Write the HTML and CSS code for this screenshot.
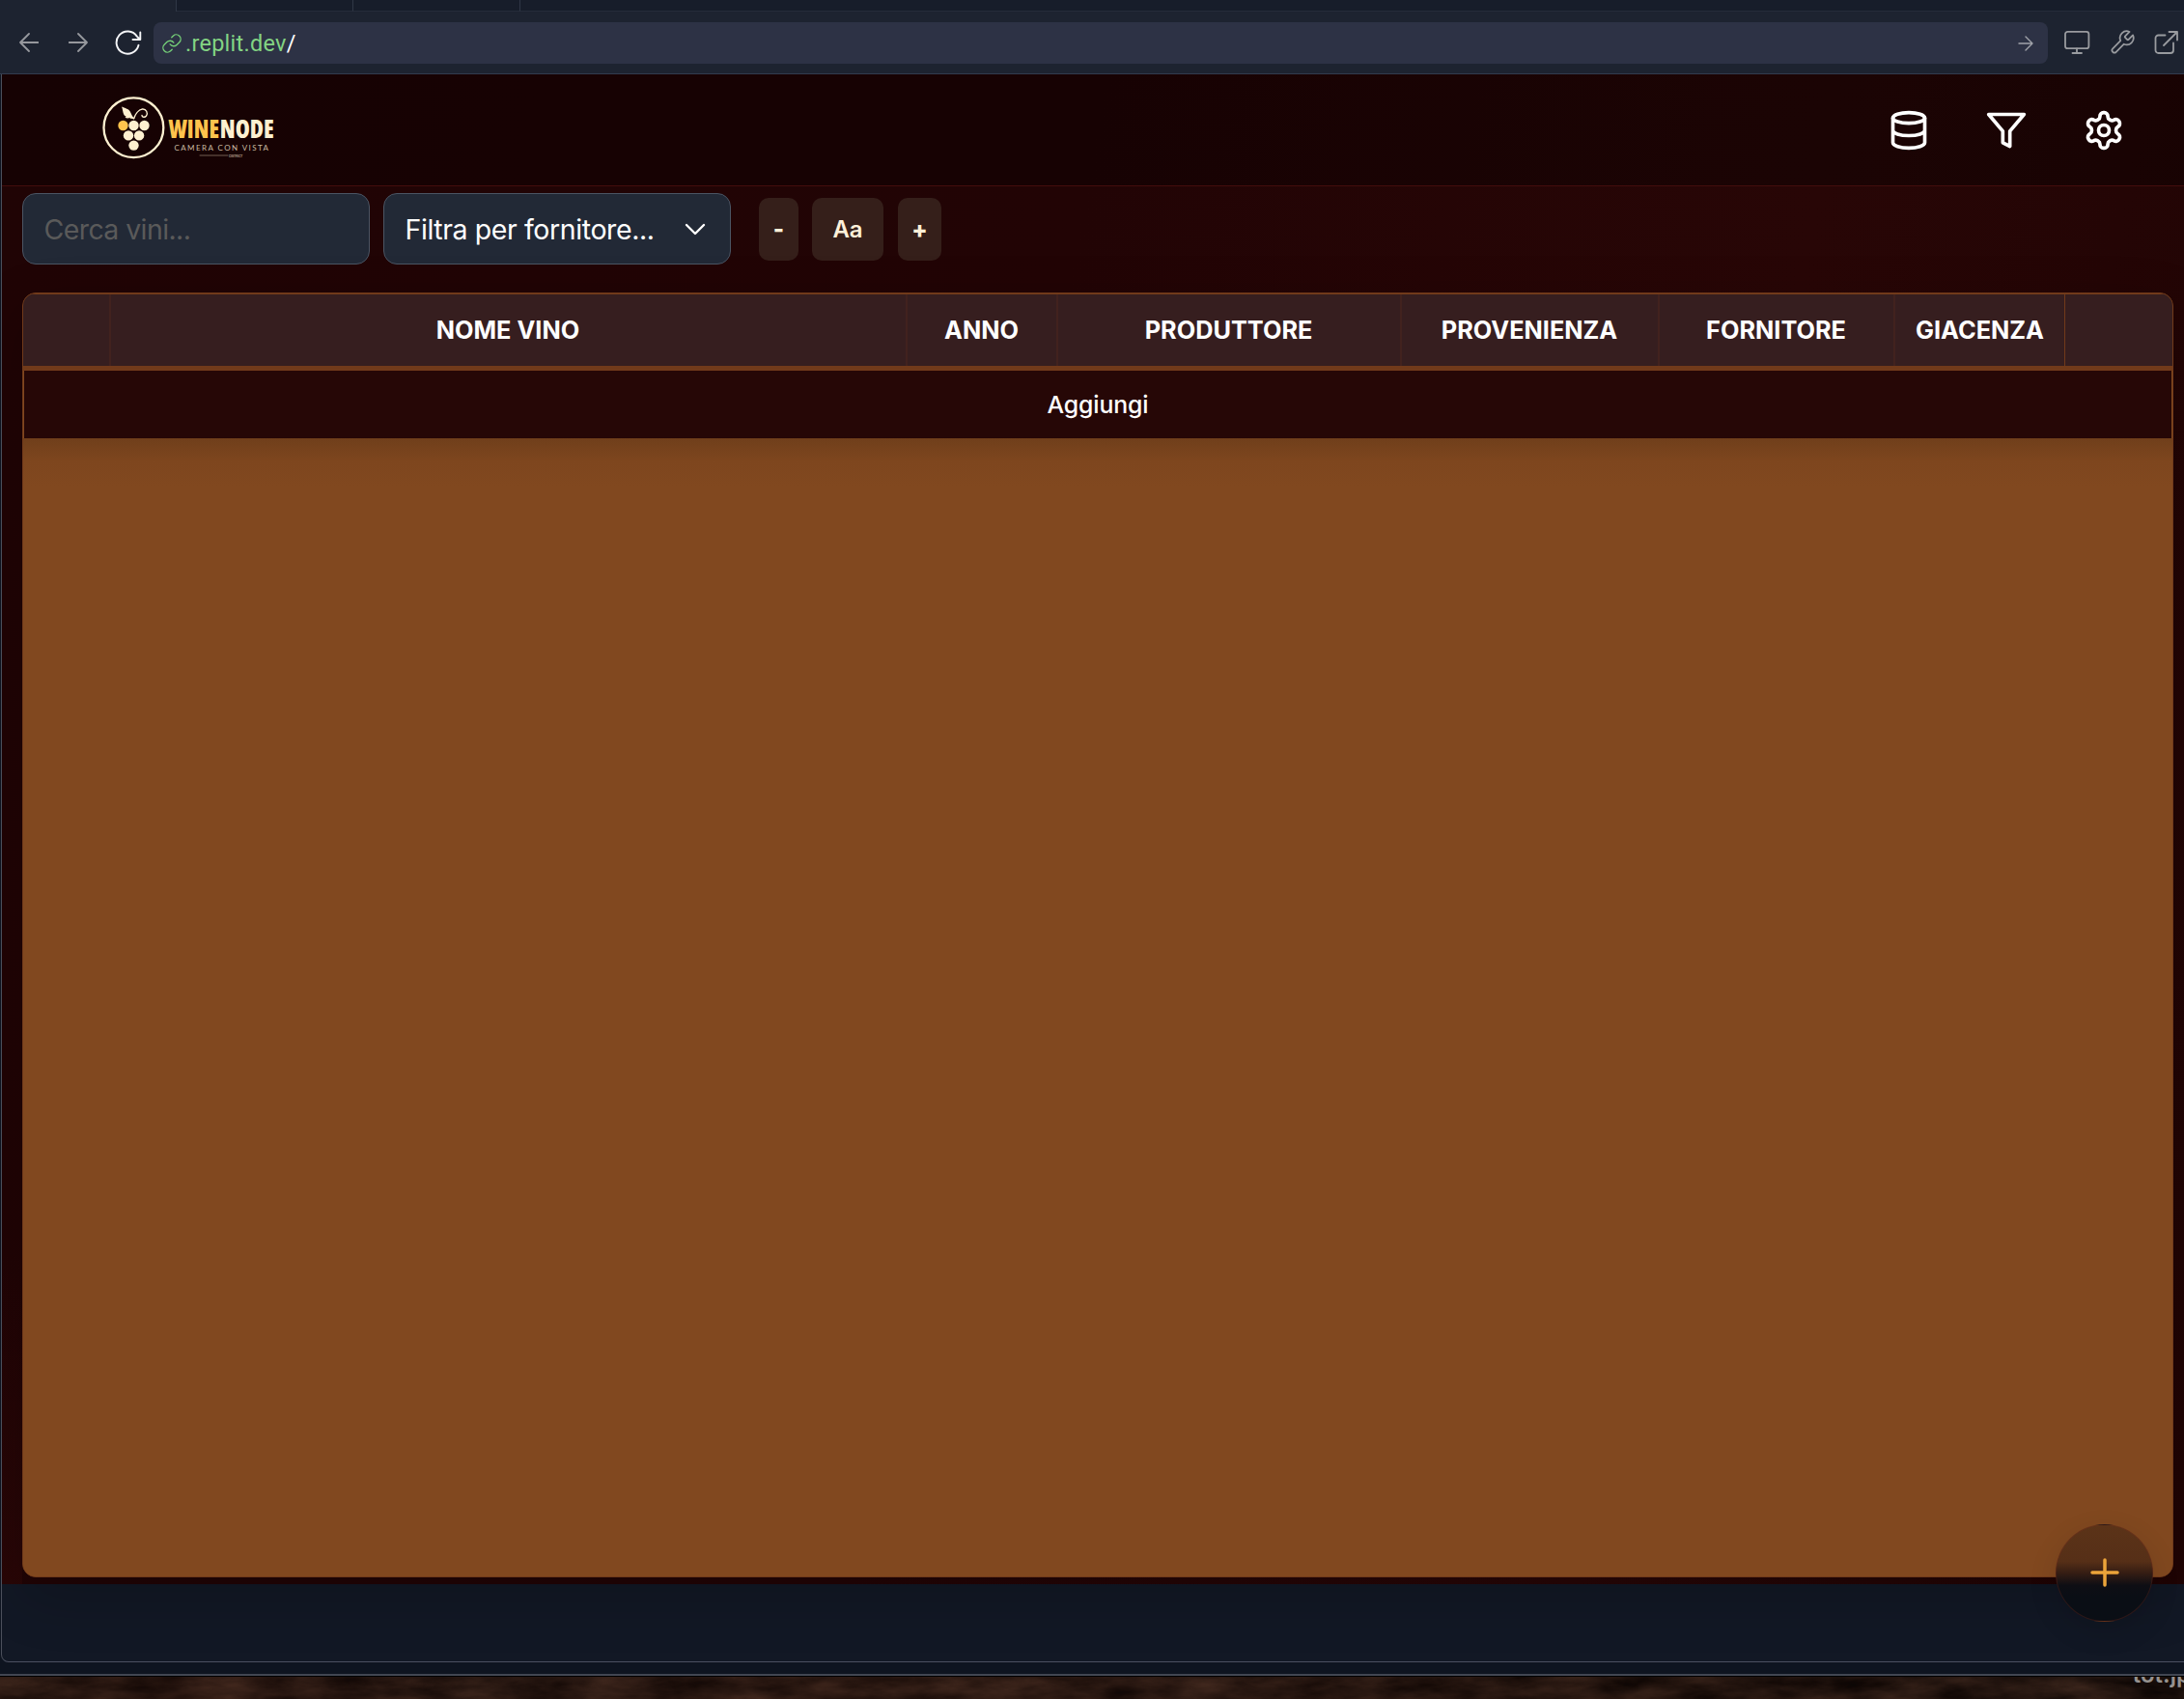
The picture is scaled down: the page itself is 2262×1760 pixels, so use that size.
FILE: index.html
```html
<!DOCTYPE html>
<html lang="it">
<head>
<meta charset="utf-8">
<title>WineNode</title>
<link rel="stylesheet" href="styles.css">
</head>
<body>
<div class="window">
  <div class="tabs"><span class="tab tab-active"></span><span class="tab"></span><span class="tab tab-third"></span><span class="tab-rest"></span></div>
  <div class="toolbar">
    <div class="nav">
      <svg class="i-back" width="20" height="20" viewBox="0 0 20 20"><path d="M19.5 10H1M10 1 1 10l9 9"/></svg>
      <svg class="i-fwd" width="20" height="20" viewBox="0 0 20 20"><path d="M.5 10H19M10 1l9 9-9 9"/></svg>
      <svg class="i-reload" width="28" height="28" viewBox="0 0 28 28"><path d="M24.5 16.800A11.600 11.600 0 1 1 22.800 7.600L26 11M26.300 3.500V11H18.500"/></svg>
    </div>
    <div class="url">
      <svg class="i-link" width="22" height="22" viewBox="0 0 24 24"><path d="M10 13a5 5 0 0 0 7.540.54l3-3a5 5 0 0 0-7.070-7.070l-1.720 1.710M14 11a5 5 0 0 0-7.540-.54l-3 3a5 5 0 0 0 7.070 7.070l1.710-1.710"/></svg>
      <span class="address">.replit.dev<b>/</b></span>
      <svg class="i-go" width="16" height="16" viewBox="0 0 16 16"><path d="M1 8h14M8 1l7 7-7 7"/></svg>
    </div>
    <div class="tools">
      <svg width="28" height="28" viewBox="0 0 28 28"><rect x="2" y="2.800" width="24.400" height="17.400" rx="2.500"/><path d="M14 20.500v4.500M9.500 25h9.500"/></svg>
      <svg width="28" height="28" viewBox="0 0 24 24"><path class="thin" d="M14.700 6.300a1 1 0 0 0 0 1.400l1.600 1.600a1 1 0 0 0 1.400 0l3.770-3.770a6 6 0 0 1-7.940 7.940l-6.910 6.910a2.120 2.120 0 0 1-3-3l6.910-6.910a6 6 0 0 1 7.940-7.940l-3.760 3.760z"/></svg>
      <svg width="28" height="28" viewBox="0 0 28 28"><path d="M12.500 6.500H5.500a3 3 0 0 0-3 3V22a3 3 0 0 0 3 3H18a3 3 0 0 0 3-3v-7.500M16.500 3H25v8.500M25 3 11 17"/></svg>
    </div>
  </div>
  <div class="preview">
    <div class="app">
      <header class="header">
        <svg class="logo" width="190" height="70" viewBox="0 0 190 70">
          <circle cx="32.400" cy="35.200" r="30.900" fill="none" stroke="#fdf0d0" stroke-width="2.300"/>
          <g fill="#fdf0d0"><path d="M20 13.500c3 1.500 8 2 9.500 6.500 1.200 2.500 1.800 4.500 4 5.500l-.5 1.200c-2-.8-3.200-1-4.500-.8l.4-1.200c-1.500.8-3.700 1-5.400 0l1.200-1c-3.700-1.200-3-6-4.700-10.200z"/>
          <circle cx="32.500" cy="33" r="5.200"/><circle cx="43.500" cy="33" r="5.200"/><circle cx="27" cy="43.400" r="5.200"/><circle cx="38.100" cy="43.400" r="5.200"/><circle cx="32.500" cy="53.600" r="5.200"/></g>
          <circle cx="21.500" cy="33" r="5.200" fill="#ffc34d"/>
          <path d="M33 25c1-3 4-8.500 8.500-9 4-.3 6 4 4 7-1.500 2-4.500 1.500-4.500-.5" fill="none" stroke="#fdf0d0" stroke-width="1.400"/>
          <text class="brand" y="45.800"><tspan class="gold" x="68.500" textLength="52.500" lengthAdjust="spacingAndGlyphs">WINE</tspan><tspan x="121.800" textLength="56" lengthAdjust="spacingAndGlyphs">NODE</tspan></text>
          <text class="tagline" x="74.500" y="58.700" textLength="97.500">CAMERA CON VISTA</text>
          <path d="M101 64h29" stroke="#8b7667" stroke-width=".8"/>
          <text class="district" x="131" y="65.500" textLength="14.500">DISTRICT</text>
        </svg>
        <div class="actions">
          <svg viewBox="0 0 24 24"><ellipse cx="12" cy="5" rx="9" ry="3"/><path d="M3 5v14a9 3 0 0 0 18 0V5M3 12a9 3 0 0 0 18 0"/></svg>
          <svg viewBox="0 0 24 24"><path d="M22 3H2l8 9.460V19l4 2v-8.540z"/></svg>
          <svg viewBox="0 0 24 24"><path d="M12.220 2h-.44a2 2 0 0 0-2 2v.18a2 2 0 0 1-1 1.730l-.43.25a2 2 0 0 1-2 0l-.15-.08a2 2 0 0 0-2.730.73l-.22.38a2 2 0 0 0 .73 2.730l.15.1a2 2 0 0 1 1 1.720v.51a2 2 0 0 1-1 1.740l-.15.09a2 2 0 0 0-.73 2.730l.22.38a2 2 0 0 0 2.730.73l.15-.08a2 2 0 0 1 2 0l.43.25a2 2 0 0 1 1 1.730V20a2 2 0 0 0 2 2h.44a2 2 0 0 0 2-2v-.18a2 2 0 0 1 1-1.730l.43-.25a2 2 0 0 1 2 0l.15.08a2 2 0 0 0 2.730-.73l.22-.39a2 2 0 0 0-.73-2.730l-.15-.08a2 2 0 0 1-1-1.740v-.5a2 2 0 0 1 1-1.740l.15-.09a2 2 0 0 0 .73-2.730l-.22-.38a2 2 0 0 0-2.730-.73l-.15.08a2 2 0 0 1-2 0l-.43-.25a2 2 0 0 1-1-1.730V4a2 2 0 0 0-2-2z"/><circle cx="12" cy="12" r="3"/></svg>
        </div>
      </header>
      <div class="filters">
        <div class="field placeholder"><span>Cerca vini...</span></div>
        <div class="field"><span>Filtra per fornitore...</span><svg width="22" height="14" viewBox="0 0 22 14"><path d="M2 2l9 9 9-9"/></svg></div>
        <div class="sizes"><button class="minus">-</button><button class="aa">Aa</button><button class="plus">+</button></div>
      </div>
      <div class="table">
        <div class="thead">
          <div></div><div><span>NOME VINO</span></div><div><span>ANNO</span></div><div><span>PRODUTTORE</span></div><div><span>PROVENIENZA</span></div><div><span>FORNITORE</span></div><div class="stock"><span>GIACENZA</span></div><div></div>
        </div>
        <div class="add-row"><span>Aggiungi</span></div>
        <div class="tbody"></div>
      </div>
    </div>
    <button class="fab"><svg width="34" height="34" viewBox="0 0 34 34"><path d="M17 4v26M4 17h26"/></svg></button>
  </div>
</div>
<div class="desktop">
  <svg class="wood" width="2262" height="23"><filter id="grain" x="0" y="0" width="100%" height="100%" color-interpolation-filters="sRGB"><feTurbulence type="fractalNoise" baseFrequency="0.015 0.05" numOctaves="6" seed="4"/><feColorMatrix values="0.38 0 0 0 -0.04  0.26 0 0 0 -0.045  0.2 0 0 0 -0.04  0 0 0 0 0.65"/></filter><rect width="2262" height="23" filter="url(#grain)"/></svg>
  <span>tot.jpg</span>
</div>
</body>
</html>
```
FILE: styles.css
```css
* { box-sizing: border-box; }
body { margin: 0; width: 2262px; height: 1760px; overflow: hidden; background: #000; font-family: Inter, "Liberation Sans", sans-serif; display: flex; flex-direction: column; }
svg { display: block; flex: none; fill: none; stroke-linecap: round; stroke-linejoin: round; }
button { border: 0; padding: 0; font: inherit; }
.window { height: 1736px; flex: none; background: #0e1420; border-bottom: 2px solid #414652; display: flex; flex-direction: column; }
.tabs { height: 12px; display: flex; background: #1d2330; }
.tab, .tab-rest { background: #171d2a; border-bottom: 1px solid #252c3a; border-right: 1px solid #303746; width: 183px; }
.tab-active { background: #1d2330; border-bottom: 0; }
.tab-third { width: 173px; }
.tab-rest { flex: 1; border-right: 0; }
.toolbar { height: 65px; display: flex; align-items: flex-start; background: #1d2330; border-bottom: 1px solid #323b4e; padding-top: 11px; }
.nav { width: 159px; height: 42px; display: flex; align-items: center; padding-left: 20px; }
.nav svg { stroke: #96989d; stroke-width: 1.800; }
.i-fwd { margin-left: 31px; }
.nav .i-reload { stroke: #f4f5f7; margin-left: 27.500px; stroke-width: 1.900; }
.url { width: 1962px; height: 43px; border-radius: 8px; background: #2d3245; display: flex; align-items: center; padding: 0 15px 0 8px; }
.i-link { stroke: #75cf78; stroke-width: 1.500; }
.address { font-family: Roboto, sans-serif; font-size: 23.500px; color: #83d483; margin-left: 3px; letter-spacing: .25px; }
.address b { font-weight: 400; color: #fff; }
.i-go { margin-left: auto; stroke: #a0a3aa; stroke-width: 1.400; }
.tools { display: flex; align-items: center; height: 42px; gap: 18.500px; padding-left: 16px; }
.tools svg { stroke: #999b9f; stroke-width: 1.800; }
.tools .thin { stroke-width: 1.500; }
.preview { position: relative; height: 1645px; margin-left: 1px; border-left: 1px solid #4b4f5b; border-bottom: 1px solid #4b5060; border-bottom-left-radius: 8px; background: #121825; overflow: hidden; }
.app { height: 1564px; background: linear-gradient(0deg, rgba(44,7,7,.7), rgba(40,6,6,0) 22%) left / 21px 100% no-repeat, linear-gradient(100deg, #200405 0%, #220405 45%, #280606 75%, #200404 100%); display: flex; flex-direction: column; }
.header { height: 116px; flex: none; background: rgba(0,0,0,.3); border-bottom: 1px solid #430d0c; display: flex; justify-content: space-between; padding: 20px 61px 0 104px; }
.brand { font-family: "Open Sans", sans-serif; font-stretch: condensed; font-weight: 800; font-size: 26px; fill: #fdf0d0; }
.gold { fill: #ffc34d; }
.tagline { font-family: Lato, sans-serif; font-size: 8px; fill: #cbbba2; }
.district { font-family: Lato, sans-serif; font-weight: 700; font-size: 4px; fill: #a08e7c; }
.actions { display: flex; gap: 57px; padding-top: 15.500px; }
.actions svg { width: 44px; height: 44px; stroke: #fff; stroke-width: 2; }
.filters { height: 110px; flex: none; display: flex; align-items: flex-start; padding: 7px 0 0 21px; gap: 14px; }
.field { width: 360px; height: 74px; border: 1px solid #4b5563; border-radius: 14px; background: #222936; color: #fff; display: flex; align-items: center; justify-content: space-between; padding: 1px 25px 0 21.500px; font-size: 28.500px; letter-spacing: -.4px; }
.field svg { stroke: #fff; stroke-width: 2.400; }
.placeholder { color: #5a5a5a; letter-spacing: -.6px; }
.sizes { display: flex; gap: 14px; margin: 5px 0 0 15px; }
.sizes button { height: 65px; width: 41px; border-radius: 10px; background: #351f1a; color: #fdf0d9; font-size: 24px; font-weight: 600; }
.sizes .minus, .sizes .plus { font-weight: 800; }
.sizes .aa { width: 74px; }
.sizes .plus { width: 45px; margin-left: 1px; }
.table { width: 2228px; height: 1331px; margin-left: 21px; border: 1px solid #713a1a; border-radius: 14px; background: #81481f; overflow: hidden; display: flex; flex-direction: column; box-shadow: 0 20px 60px rgba(0,0,0,.2); }
.thead { height: 80px; flex: none; border-top: 1px solid #713a1a; border-bottom: 5px solid #713a1a; background: #361e1f; display: grid; grid-template-columns: 91px 825px 156px 356px 267px 244px 176px 1fr; color: #fff; font-size: 25.300px; font-weight: 700; }
.thead div { display: flex; align-items: center; justify-content: center; border-right: 2px solid #42221e; padding: 0 1px 1px 0; white-space: nowrap; }
.thead .stock { border-right: 1px solid #713a1a; padding-right: 0; }
.thead div:last-child { border-right: 0; }
.add-row { height: 70px; flex: none; margin: 0 1px; background: #260706; display: flex; align-items: center; justify-content: center; color: #fff; font-size: 24.800px; font-weight: 500; letter-spacing: -.1px; }
.tbody { flex: 1; background: linear-gradient(#703f1b, #7e461e 24px, #81481f 50px); }
.fab { position: absolute; left: 2127px; top: 1501.500px; width: 101px; height: 101px; border-radius: 50%; background: linear-gradient(#5b3318 0%, #562f17 38%, #351d13 50%, #0e0e14 63%, #0a0e15 75%); border: 1px solid rgba(127,45,30,.3); box-shadow: 0 10px 30px rgba(0,0,0,.12); display: flex; align-items: center; justify-content: center; }
.fab svg { stroke: #eba43a; stroke-width: 3.500; }
.desktop { position: relative; flex: 1; border-top: 1px solid #000; overflow: hidden; display: flex; justify-content: flex-end; background: linear-gradient(90deg, #2b1a13, #341c15 8%, #261712 22%, #382018 38%, #2b1913 55%, #23150f 75%, #17100d 100%); }
.wood { position: absolute; left: 0; top: 0; }
.desktop span { position: relative; color: #96928f; font-size: 24px; font-weight: 600; line-height: 24px; margin: -14px -22px 0 0; }
```
